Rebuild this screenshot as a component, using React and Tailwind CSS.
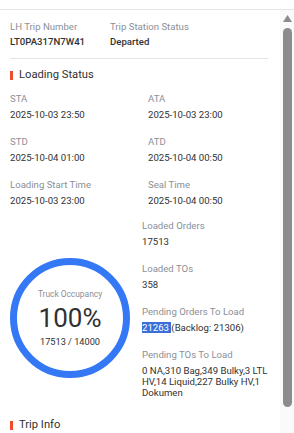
import React from 'react';

function Field({ label, children, className = '' }) {
  return (
    <div className={className}>
      <div className="text-[9.6px] leading-[12px] text-[#8a8f99]">{label}</div>
      <div className="mt-[4px] text-[9.6px] leading-[11px] text-[#303133]">{children}</div>
    </div>
  );
}

function SectionTitle({ children }) {
  return (
    <div className="flex items-center gap-[6px] h-[16px]">
      <span className="w-[3px] h-[9px] bg-[#ee4d2d]" />
      <span className="text-[11.2px] leading-[16px] text-[#303133]">{children}</span>
    </div>
  );
}

function Gauge() {
  return (
    <div className="relative w-[120px] h-[120px]">
      <svg width="120" height="120" viewBox="0 0 120 120" className="absolute inset-0">
        <circle cx="60" cy="60" r="56.5" fill="none" stroke="#3478f6" strokeWidth="7" />
      </svg>
      <div className="absolute inset-0 flex flex-col items-center justify-center">
        <div className="text-[8.4px] leading-[10px] text-[#8a8f99]">Truck Occupancy</div>
        <div className="mt-[5px] text-[26px] leading-[28px] text-[#303133]">100%</div>
        <div className="mt-[4px] text-[9.2px] leading-[11px] text-[#303133]">17513 / 14000</div>
      </div>
    </div>
  );
}

export default function App() {
  return (
    <div className="w-[294px] h-[433px] bg-white flex overflow-hidden" style={{ fontFamily: 'Roboto, "Noto Sans", sans-serif' }}>
      <div className="w-[2px] bg-[#878787]" />
      <div className="flex-1 flex flex-col">
        <div className="h-[12px] border-b border-[#e4e4e7]" />
        <div className="flex-1 flex">
          <div className="flex-1 pl-[10px] pr-[12px] pt-[10px]">
            <div className="flex">
              <div className="w-[100px]">
                <div className="text-[9.6px] leading-[14px] text-[#8a8f99]">LH Trip Number</div>
                <div className="mt-[1px] text-[9.6px] leading-[14px] font-medium text-[#303133]">LT0PA317N7W41</div>
              </div>
              <div>
                <div className="text-[9.6px] leading-[14px] text-[#8a8f99]">Trip Station Status</div>
                <div className="mt-[1px] text-[9.6px] leading-[14px] font-medium text-[#303133]">Departed</div>
              </div>
            </div>
            <div className="mt-[9px] border-t border-[#e4e4e7]" />
            <div className="mt-[8px]">
              <SectionTitle>Loading Status</SectionTitle>
            </div>
            <div className="mt-[10px] grid grid-cols-[138px_1fr] gap-y-[16px]">
              <Field label="STA">2025-10-03 23:50</Field>
              <Field label="ATA">2025-10-03 23:00</Field>
              <Field label="STD">2025-10-04 01:00</Field>
              <Field label="ATD">2025-10-04 00:50</Field>
              <Field label="Loading Start Time">2025-10-03 23:00</Field>
              <Field label="Seal Time">2025-10-04 00:50</Field>
            </div>
            <div className="mt-[14px] flex">
              <div className="w-[132px] pt-[38px]">
                <Gauge />
              </div>
              <div className="flex flex-col gap-[16px] w-[126px]">
                <Field label="Loaded Orders">17513</Field>
                <Field label="Loaded TOs">358</Field>
                <Field label="Pending Orders To Load">
                  <span className="bg-[#3a6fd8] text-white">21263 </span>(Backlog: 21306)
                </Field>
                <Field label="Pending TOs To Load">0 NA,310 Bag,349 Bulky,3 LTL HV,14 Liquid,227 Bulky HV,1 Dokumen</Field>
              </div>
            </div>
            <div className="mt-[19px]">
              <SectionTitle>Trip Info</SectionTitle>
            </div>
          </div>
          <div className="w-[14px] bg-[#fafafa] flex flex-col items-center pt-[5px]">
            <svg width="9" height="7" viewBox="0 0 9 7">
              <path d="M4.5 0 L9 7 L0 7 Z" fill="#8c8c8c" />
            </svg>
            <div className="mt-[6px] w-[9px] h-[379px] rounded-full bg-[#8c8c8c]" />
          </div>
        </div>
      </div>
    </div>
  );
}
